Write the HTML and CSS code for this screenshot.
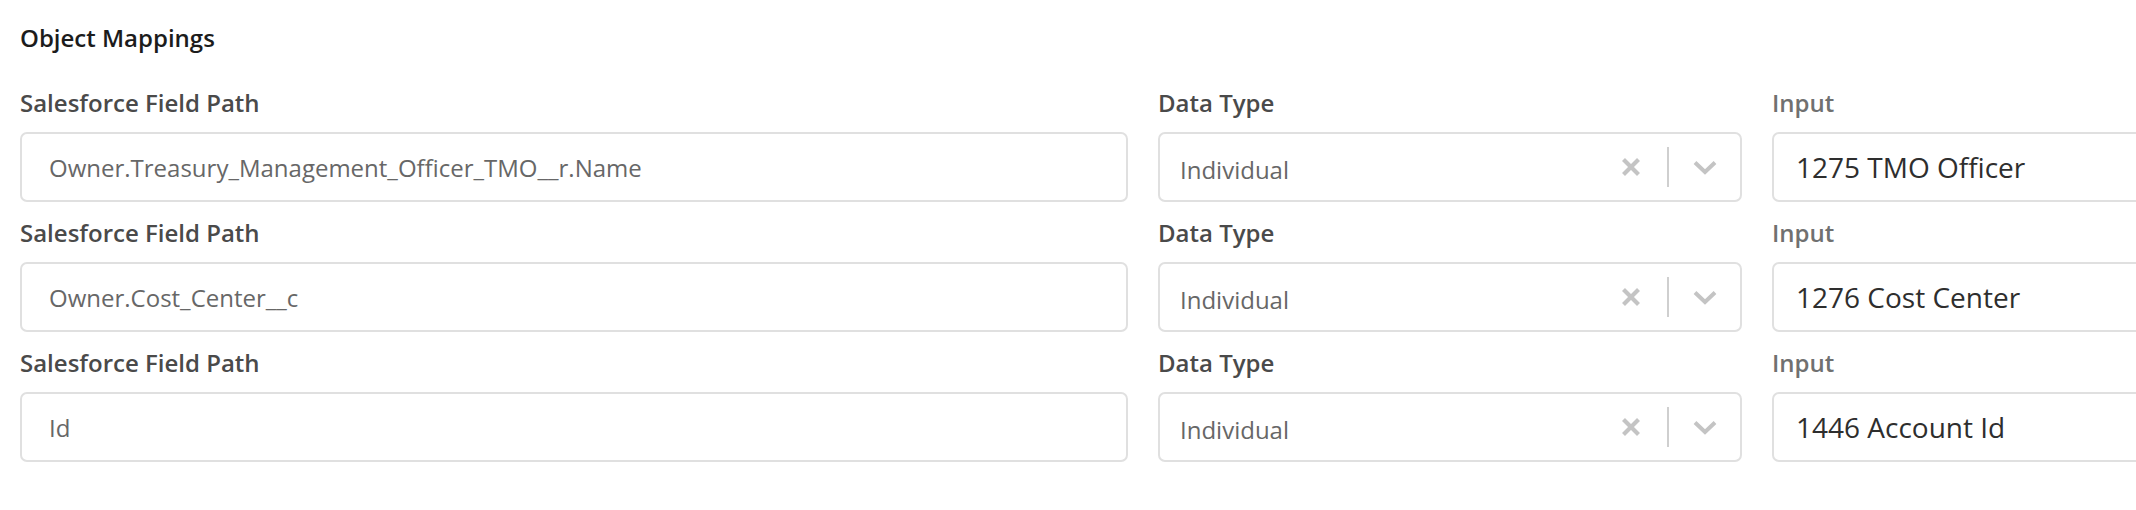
FILE: index.html
```html
<!DOCTYPE html>
<html lang="en">
<head>
<meta charset="utf-8">
<title>Object Mappings</title>
<link rel="stylesheet" href="styles.css">
</head>
<body>
<section class="mappings">
  <h2 class="mappings__title">Object Mappings</h2>
  <div class="mappings__list">
    <div class="mapping-row">
      <div class="field">
        <div class="field__label">Salesforce Field Path</div>
        <div class="text-input">Owner.Treasury_Management_Officer_TMO__r.Name</div>
      </div>
      <div class="field">
        <div class="field__label">Data Type</div>
        <div class="select">
          <div class="select__value">Individual</div>
          <div class="select__indicators">
            <span class="select__clear"><svg width="20" height="20" viewBox="0 0 20 20"><path d="M2.5 2.5 L17.5 17.5 M17.5 2.5 L2.5 17.5" stroke="#c4c4c4" stroke-width="4.2" fill="none"/></svg></span>
            <span class="select__sep"></span>
            <span class="select__chev"><svg width="24" height="15" viewBox="0 0 24 15"><path d="M2 2.5 L12 12 L22 2.5" stroke="#c4c4c4" stroke-width="4" fill="none"/></svg></span>
          </div>
        </div>
      </div>
      <div class="field">
        <div class="field__label field__label--muted">Input</div>
        <div class="value-input">1275 TMO Officer</div>
      </div>
    </div>
    <div class="mapping-row">
      <div class="field">
        <div class="field__label">Salesforce Field Path</div>
        <div class="text-input">Owner.Cost_Center__c</div>
      </div>
      <div class="field">
        <div class="field__label">Data Type</div>
        <div class="select">
          <div class="select__value">Individual</div>
          <div class="select__indicators">
            <span class="select__clear"><svg width="20" height="20" viewBox="0 0 20 20"><path d="M2.5 2.5 L17.5 17.5 M17.5 2.5 L2.5 17.5" stroke="#c4c4c4" stroke-width="4.2" fill="none"/></svg></span>
            <span class="select__sep"></span>
            <span class="select__chev"><svg width="24" height="15" viewBox="0 0 24 15"><path d="M2 2.5 L12 12 L22 2.5" stroke="#c4c4c4" stroke-width="4" fill="none"/></svg></span>
          </div>
        </div>
      </div>
      <div class="field">
        <div class="field__label field__label--muted">Input</div>
        <div class="value-input">1276 Cost Center</div>
      </div>
    </div>
    <div class="mapping-row">
      <div class="field">
        <div class="field__label">Salesforce Field Path</div>
        <div class="text-input">Id</div>
      </div>
      <div class="field">
        <div class="field__label">Data Type</div>
        <div class="select">
          <div class="select__value">Individual</div>
          <div class="select__indicators">
            <span class="select__clear"><svg width="20" height="20" viewBox="0 0 20 20"><path d="M2.5 2.5 L17.5 17.5 M17.5 2.5 L2.5 17.5" stroke="#c4c4c4" stroke-width="4.2" fill="none"/></svg></span>
            <span class="select__sep"></span>
            <span class="select__chev"><svg width="24" height="15" viewBox="0 0 24 15"><path d="M2 2.5 L12 12 L22 2.5" stroke="#c4c4c4" stroke-width="4" fill="none"/></svg></span>
          </div>
        </div>
      </div>
      <div class="field">
        <div class="field__label field__label--muted">Input</div>
        <div class="value-input">1446 Account Id</div>
      </div>
    </div>
  </div>
</section>
</body>
</html>
```
FILE: styles.css
```css
html, body {
  margin: 0;
  padding: 0;
  background: #ffffff;
  overflow: hidden;
}

body {
  font-family: "Open Sans", "Noto Sans", sans-serif;
  color: #333333;
}

.mappings {
  padding: 23px 0 0 20px;
}

.mappings__title {
  margin: 0 0 35px 0;
  font-size: 24px;
  line-height: 30px;
  font-weight: 600;
  color: #1c1c1c;
}

.mappings__list {
  display: flex;
  flex-direction: column;
  gap: 16px;
}

.mapping-row {
  display: grid;
  grid-template-columns: 1108px 584px 420px;
  column-gap: 30px;
}

.field {
  display: flex;
  flex-direction: column;
}

.field__label {
  font-size: 24px;
  line-height: 30px;
  font-weight: 600;
  color: #4a4a4a;
  margin-bottom: 14px;
}

.field__label--muted {
  color: #707070;
}

.text-input,
.select,
.value-input {
  box-sizing: border-box;
  height: 70px;
  border: 2px solid #e0e0e0;
  border-radius: 7px;
  background: #fff;
  display: flex;
  align-items: center;
}

.text-input {
  padding-left: 27px;
  font-size: 24px;
  color: #676767;
}

.select__value {
  flex: 1;
  padding-left: 20px;
  padding-top: 5px;
  font-size: 24px;
  color: #676767;
}

.select__indicators {
  display: flex;
  align-items: center;
  padding-right: 16px;
}

.select__clear,
.select__chev {
  width: 38px;
  display: flex;
  justify-content: center;
  align-items: center;
}

.select__clear {
  margin-right: 17px;
}

.select__chev {
  margin-left: 17px;
}

.select__sep {
  width: 2px;
  height: 40px;
  background: #cfcfcf;
}

.value-input {
  padding-left: 22px;
  font-size: 28px;
  color: #2e2e2e;
}
```
